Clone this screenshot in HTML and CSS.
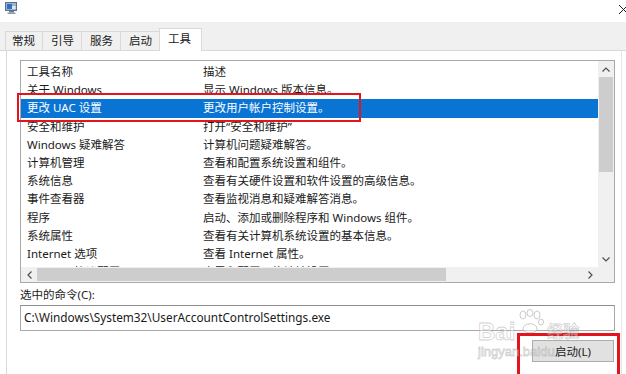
FILE: index.html
```html
<!DOCTYPE html>
<html lang="zh-CN">
<head>
    <meta charset="UTF-8">
    <title>系统配置</title>
    <link rel="stylesheet" href="styles.css">
</head>
<body>

    <!-- Title bar -->
    <div class="titlebar">
        <svg class="app-icon" width="13" height="13" viewBox="0 0 13 13">
            <rect x="0.5" y="0.5" width="11" height="8" fill="#9fb4cc" stroke="#5a6f8c"/>
            <rect x="2" y="2" width="5" height="5" fill="#2f6fc0"/>
            <rect x="7" y="4" width="3.5" height="3" fill="#dfe8f2"/>
            <rect x="4" y="9" width="5" height="1.5" fill="#6c7a8c"/>
            <rect x="2.5" y="10.5" width="8" height="1.5" fill="#8d99a8"/>
        </svg>
        <svg class="close-x" width="11" height="11" viewBox="0 0 11 11">
            <path d="M1 1 L10 10 M10 1 L1 10" stroke="#222" stroke-width="1"/>
        </svg>
    </div>

    <!-- Tabs -->
    <div class="tabstrip">
        <div class="tab">常规</div>
        <div class="tab">引导</div>
        <div class="tab">服务</div>
        <div class="tab">启动</div>
        <div class="tab active">工具</div>
    </div>

    <!-- Tab page -->
    <div class="panel">
        <div class="listbox">
            <div class="rows">
                <div class="row header"><span class="c1">工具名称</span><span class="c2">描述</span></div>
                <div class="row"><span class="c1">关于 Windows</span><span class="c2">显示 Windows 版本信息。</span></div>
                <div class="row selected"><span class="c1">更改 UAC 设置</span><span class="c2">更改用户帐户控制设置。</span></div>
                <div class="row"><span class="c1">安全和维护</span><span class="c2">打开“安全和维护”</span></div>
                <div class="row"><span class="c1">Windows 疑难解答</span><span class="c2">计算机问题疑难解答。</span></div>
                <div class="row"><span class="c1">计算机管理</span><span class="c2">查看和配置系统设置和组件。</span></div>
                <div class="row"><span class="c1">系统信息</span><span class="c2">查看有关硬件设置和软件设置的高级信息。</span></div>
                <div class="row"><span class="c1">事件查看器</span><span class="c2">查看监视消息和疑难解答消息。</span></div>
                <div class="row"><span class="c1">程序</span><span class="c2">启动、添加或删除程序和 Windows 组件。</span></div>
                <div class="row"><span class="c1">系统属性</span><span class="c2">查看有关计算机系统设置的基本信息。</span></div>
                <div class="row"><span class="c1">Internet 选项</span><span class="c2">查看 Internet 属性。</span></div>
                <div class="row"><span class="c1">Internet 协议配置</span><span class="c2">查看和配置网络地址设置。</span></div>
            </div>

            <div class="vscroll">
                <div class="sb-btn">
                    <svg width="8" height="5" viewBox="0 0 8 5"><path d="M0.5 4.5 L4 1 L7.5 4.5" fill="none" stroke="#505050" stroke-width="1.2"/></svg>
                </div>
                <div class="vthumb"></div>
                <div class="sb-track"></div>
                <div class="sb-btn">
                    <svg width="8" height="5" viewBox="0 0 8 5"><path d="M0.5 0.5 L4 4 L7.5 0.5" fill="none" stroke="#505050" stroke-width="1.2"/></svg>
                </div>
            </div>

            <div class="hscroll">
                <div class="sb-btn">
                    <svg width="5" height="8" viewBox="0 0 5 8"><path d="M4.5 0.5 L1 4 L4.5 7.5" fill="none" stroke="#505050" stroke-width="1.2"/></svg>
                </div>
                <div class="hthumb"></div>
                <div class="sb-track"></div>
                <div class="sb-btn">
                    <svg width="5" height="8" viewBox="0 0 5 8"><path d="M0.5 0.5 L4 4 L0.5 7.5" fill="none" stroke="#505050" stroke-width="1.2"/></svg>
                </div>
            </div>

            <div class="corner"></div>
        </div>

        <div class="cmd-label">选中的命令(C):</div>
        <div class="cmd-box">C:\Windows\System32\UserAccountControlSettings.exe</div>

        <div class="btn-row">
            <button class="launch-btn">启动(L)</button>
        </div>
    </div>

    <!-- Annotations drawn over the screenshot -->
    <div class="mark mark-row"></div>
    <div class="mark mark-btn"></div>

    <div class="watermark">
        <div class="wm-logo">
            <span class="wm-big">Bai</span>
            <svg class="wm-paw" width="30" height="26" viewBox="0 0 30 26">
                <g fill="rgba(255,255,255,0.5)" stroke="rgba(160,160,160,0.55)" stroke-width="1">
                    <ellipse cx="8" cy="6" rx="3" ry="4"/>
                    <ellipse cx="15" cy="4" rx="3" ry="3.5"/>
                    <ellipse cx="22" cy="6" rx="3" ry="4"/>
                    <ellipse cx="26" cy="13" rx="2.5" ry="3"/>
                    <path d="M8 20 C8 13 22 13 22 20 C22 25 8 25 8 20 Z"/>
                </g>
            </svg>
            <span class="wm-cn">经验</span>
        </div>
        <div class="wm-url">jingyan.baidu</div>
    </div>

</body>
</html>
```

FILE: styles.css
```css
* {
    margin: 0;
    padding: 0;
    box-sizing: border-box;
}

body {
    width: 626px;
    height: 374px;
    overflow: hidden;
    background: #ffffff;
    font-family: "Noto Sans", "Noto Sans CJK SC", sans-serif;
    font-size: 11.5px;
    color: #1a1a1a;
    position: relative;
}

/* Title bar */
.titlebar {
    height: 22px;
    display: flex;
    justify-content: space-between;
    align-items: flex-start;
    padding: 2px 0 0 5px;
}

.close-x {
    margin-top: 2px;
    margin-right: -3px;
}

/* Tabs */
.tabstrip {
    height: 29px;
    background: #f0f0f0;
    display: flex;
    align-items: flex-end;
    padding-left: 5px;
    border-bottom: 1px solid #d9d9d9;
}

.tab {
    height: 19px;
    line-height: 17px;
    padding: 0 7px 0 8px;
    border: 1px solid #d9d9d9;
    border-bottom: none;
    margin-left: -1px;
    background: #f0f0f0;
}

.tab:first-child {
    margin-left: 0;
    padding-left: 6px;
}

.tab.active {
    height: 23px;
    line-height: 20px;
    background: #ffffff;
    margin-bottom: -1px;
    padding: 0 10px 0 8px;
}

/* Tab page */
.panel {
    margin-left: 6px;
    margin-right: 4px;
    height: 330px;
    background: #ffffff;
    border-left: 1px solid #d9d9d9;
    border-right: 1px solid #e6e6e6;
    padding: 9px 0 0 13px;
}

.listbox {
    width: 595px;
    height: 223px;
    border: 1px solid #a9a9a9;
    display: grid;
    grid-template-columns: 1fr 16px;
    grid-template-rows: 1fr 15px;
}

.rows {
    overflow: hidden;
    padding-top: 2px;
}

.row {
    display: flex;
    height: 18.2px;
    line-height: 18px;
    white-space: nowrap;
}

.row .c1 {
    width: 176px;
    padding-left: 6px;
}

.row .c2 {
    padding-left: 6px;
}

.row.selected {
    background: #0a74d4;
    color: #ffffff;
}

/* Scrollbars */
.vscroll {
    background: #f0f0f0;
    display: flex;
    flex-direction: column;
}

.hscroll {
    background: #f0f0f0;
    display: flex;
}

.sb-btn {
    width: 16px;
    height: 16px;
    flex-shrink: 0;
    display: flex;
    align-items: center;
    justify-content: center;
}

.hscroll .sb-btn {
    height: 15px;
}

.sb-track {
    flex: 1;
}

.vthumb {
    height: 95px;
    margin: 0 1px;
    background: #cdcdcd;
}

.hthumb {
    width: 409px;
    margin: 1px 0;
    background: #cdcdcd;
}

.corner {
    background: #f0f0f0;
}

/* Command */
.cmd-label {
    margin-top: 5px;
    line-height: 14px;
    height: 14px;
}

.cmd-box {
    margin-top: 3px;
    width: 595px;
    height: 26px;
    border: 1px solid #a9a9a9;
    border-top-color: #8e8e8e;
    padding-left: 3px;
    line-height: 23px;
    font-size: 11.8px;
}

.btn-row {
    width: 595px;
    display: flex;
    justify-content: flex-end;
    margin-top: 9px;
}

.launch-btn {
    width: 82px;
    height: 22px;
    margin-right: 1px;
    background: #e1e1e1;
    border: 1px solid #adadad;
    font-family: inherit;
    font-size: 11.5px;
    color: #1a1a1a;
}

/* Red highlight boxes */
.mark {
    position: absolute;
    border: 2px solid #e3141c;
}

.mark-row {
    left: 17px;
    top: 93px;
    width: 344px;
    height: 29px;
}

.mark-btn {
    left: 517px;
    top: 333px;
    width: 103px;
    height: 50px;
    border-width: 3px;
}

/* Watermark */
.watermark {
    position: absolute;
    left: 478px;
    top: 305px;
    color: rgba(255, 255, 255, 0.4);
    -webkit-text-stroke: 0.8px rgba(150, 150, 150, 0.45);
}

.wm-logo {
    display: flex;
    align-items: flex-end;
    height: 40px;
}

.wm-big {
    font-family: "Liberation Sans", sans-serif;
    font-weight: bold;
    font-size: 24px;
    line-height: 26px;
}

.wm-paw {
    margin: 0 2px 10px 0;
}

.wm-cn {
    font-size: 16px;
    line-height: 20px;
    font-weight: bold;
    margin-bottom: 4px;
}

.wm-url {
    font-family: "Liberation Sans", sans-serif;
    font-size: 13px;
    line-height: 14px;
}
```
